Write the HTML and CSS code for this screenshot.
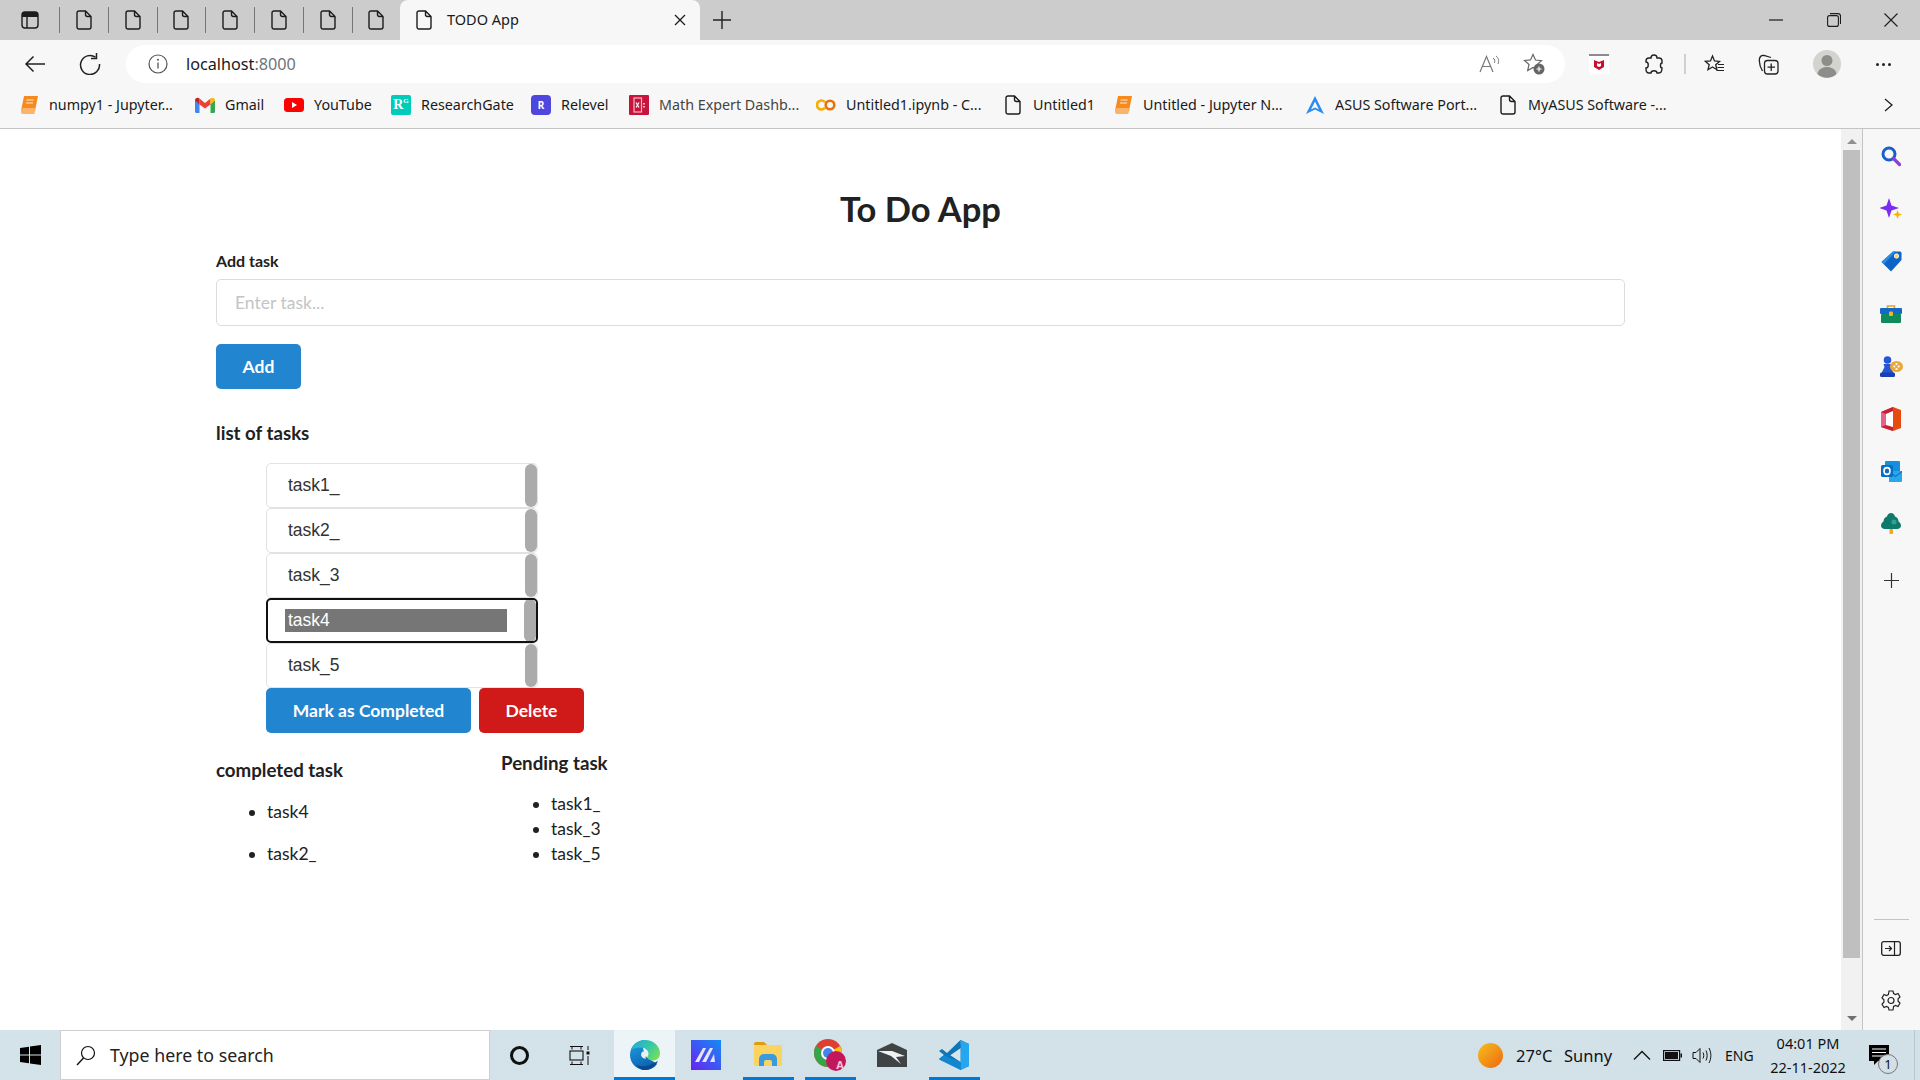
FILE: index.html
```html
<!DOCTYPE html>
<html>
<head>
    <title>TODO App</title>
    <link rel="stylesheet" href="styles.css">
</head>
<body>
    <svg class="defs" width="0" height="0">
        <symbol id="doc" viewBox="0 0 16 20">
            <path d="M3 1h6.500L15 6.500V17a2 2 0 0 1-2 2H3a2 2 0 0 1-2-2V3a2 2 0 0 1 2-2z M9.500 1v3.500a2 2 0 0 0 2 2H15" fill="none" stroke="#1c1c1c" stroke-width="1.400"/>
        </symbol>
        <symbol id="book" viewBox="0 0 20 20">
            <path d="M5 1h14l-3 15H2z" fill="#f58a1f"/>
            <path d="M2 16c0-2 1-3 3-3h11l-.6 6H4c-1.500 0-2-1-2-3z" fill="#fbb26a"/>
            <path d="M7.500 5h7M7 8h7" stroke="#fff" stroke-width="1.200" opacity=".8"/>
        </symbol>
    </svg>

    <div class="tabstrip">
        <div class="tab-menu">
            <svg width="18" height="18" viewBox="0 0 18 18"><rect x="1" y="1" width="16" height="16" rx="3" fill="none" stroke="#1c1c1c" stroke-width="1.400"/><path d="M1 4a3 3 0 0 1 3-3h10a3 3 0 0 1 3 3v2H1z" fill="#1c1c1c"/><path d="M6 6v11" stroke="#1c1c1c" stroke-width="1.400"/></svg>
        </div>
        <div class="tab-mini"><svg width="16" height="20"><use href="#doc"/></svg></div>
        <div class="tab-mini"><svg width="16" height="20"><use href="#doc"/></svg></div>
        <div class="tab-mini"><svg width="16" height="20"><use href="#doc"/></svg></div>
        <div class="tab-mini"><svg width="16" height="20"><use href="#doc"/></svg></div>
        <div class="tab-mini"><svg width="16" height="20"><use href="#doc"/></svg></div>
        <div class="tab-mini"><svg width="16" height="20"><use href="#doc"/></svg></div>
        <div class="tab-mini last"><svg width="16" height="20"><use href="#doc"/></svg></div>
        <div class="tab-active">
            <svg width="16" height="20"><use href="#doc"/></svg>
            <span class="tab-title">TODO App</span>
            <svg class="tab-close" width="12" height="12" viewBox="0 0 12 12"><path d="M1 1l10 10M11 1L1 11" stroke="#1c1c1c" stroke-width="1.300"/></svg>
        </div>
        <svg class="tab-new" width="18" height="18" viewBox="0 0 18 18"><path d="M9 0v18M0 9h18" stroke="#222" stroke-width="1.400"/></svg>
        <div class="win-controls">
            <svg width="14" height="14" viewBox="0 0 14 14"><path d="M0 7h14" stroke="#1c1c1c" stroke-width="1.200"/></svg>
            <svg width="14" height="14" viewBox="0 0 14 14"><rect x=".6" y="2.600" width="10.800" height="10.800" rx="2" fill="none" stroke="#1c1c1c" stroke-width="1.100"/><path d="M3 .6h8a2.500 2.500 0 0 1 2.500 2.500v8" fill="none" stroke="#1c1c1c" stroke-width="1.100"/></svg>
            <svg width="14" height="14" viewBox="0 0 14 14"><path d="M.5.500l13 13M13.500.5l-13 13" stroke="#1c1c1c" stroke-width="1.100"/></svg>
        </div>
    </div>

    <div class="toolbar">
        <svg class="tb-back" width="22" height="18" viewBox="0 0 22 18"><path d="M21 9H2M9.500 1.500L2 9l7.500 7.500" fill="none" stroke="#222" stroke-width="1.500"/></svg>
        <svg class="tb-reload" width="22" height="22" viewBox="0 0 22 22"><path d="M16.500 4.200A9.500 9.500 0 1 0 20.500 11" fill="none" stroke="#222" stroke-width="1.500"/><path d="M17.500 0v5.500H12" fill="none" stroke="#222" stroke-width="1.500"/></svg>
        <div class="address">
            <svg width="20" height="20" viewBox="0 0 20 20"><circle cx="10" cy="10" r="9" fill="none" stroke="#555" stroke-width="1.200"/><path d="M10 8.500v6" stroke="#555" stroke-width="1.300"/><circle cx="10" cy="5.800" r="1" fill="#555"/></svg>
            <span class="url">localhost<span class="url-port">:8000</span></span>
            <svg class="addr-read" width="22" height="18" viewBox="0 0 22 18"><path d="M1 17L7.500 1.500 14 17M3.500 11.500h8" fill="none" stroke="#777" stroke-width="1.200"/><path d="M14 3c2 1 2 3 1.500 5M17 1c3 2 3 5 2 8" fill="none" stroke="#777" stroke-width="1"/></svg>
            <svg class="addr-fav" width="22" height="22" viewBox="0 0 22 22"><path d="M10 1.500l2.500 5.500 6 .6-4.500 4 1.300 5.900L10 14.500l-5.300 3 1.300-6-4.500-4 6-.6z" fill="none" stroke="#666" stroke-width="1.200"/><circle cx="16" cy="16" r="5.500" fill="#666"/><path d="M13.500 16h5M16 13.500v5" stroke="#fff" stroke-width="1.200"/></svg>
        </div>
        <svg class="tb-mcafee" width="20" height="20" viewBox="0 0 20 20"><rect width="20" height="20" fill="#fff"/><rect width="20" height="2" fill="#8b8b8b"/><path d="M5 6l5 2 5-2v7l-5 3-5-3z" fill="#c8102e"/><path d="M8 9v3l2 1 2-1V9l-2 1z" fill="#fff"/></svg>
        <svg class="tb-ext" width="20" height="21" viewBox="0 0 20 21"><path d="M7 4c0-4 6-4 6 0h2c2 0 3 1 3 3v2c-2 0-2 5 0 5 0 3-1 5-3 5h-2c0-3-6-3-6 0H5c-2 0-3-2-3-4v-1c3 0 3-6 0-6V7c0-2 1-3 3-3z" fill="none" stroke="#222" stroke-width="1.400"/></svg>
        <div class="tb-sep"></div>
        <svg class="tb-favs" width="21" height="21" viewBox="0 0 21 21"><path d="M8.500 2l2 5 5 .4-3.800 3.300 1.200 5-4.400-2.700L4 15.700l1.200-5L1.500 7.400l5-.4z" fill="none" stroke="#222" stroke-width="1.300"/><path d="M14 10.500h6M13.500 13.500h6.500M12.500 16.500h7.500" stroke="#222" stroke-width="1.200"/></svg>
        <svg class="tb-coll" width="21" height="21" viewBox="0 0 21 21"><rect x="6.500" y="6.500" width="13.500" height="13.500" rx="3" fill="none" stroke="#222" stroke-width="1.300"/><path d="M13.200 9.500v7.500M9.500 13.200H17" stroke="#222" stroke-width="1.300"/><path d="M4.500 17C2 13 1 8 1.500 4.500 2 2.500 3.500 1 6 1.500L13 3.500" fill="none" stroke="#222" stroke-width="1.300"/></svg>
        <svg class="tb-avatar" width="28" height="28" viewBox="0 0 28 28"><circle cx="14" cy="14" r="14" fill="#d3d3d0"/><circle cx="14" cy="10.500" r="5.500" fill="#8d8d8a"/><path d="M4.500 24c1-5 5-7 9.500-7s8.500 2 9.500 7a14 14 0 0 1-19 0z" fill="#8d8d8a"/></svg>
        <div class="tb-dots"><i></i><i></i><i></i></div>
    </div>

    <div class="bookmarks">
        <div class="bm"><svg width="20" height="20"><use href="#book"/></svg><span>numpy1 - Jupyter...</span></div>
        <div class="bm"><svg width="20" height="16" viewBox="0 0 20 16"><path d="M0 3v11.500A1.500 1.500 0 0 0 1.500 16H4.500V7z" fill="#4285f4"/><path d="M20 3v11.500a1.500 1.500 0 0 1-1.500 1.500h-3V7z" fill="#34a853"/><path d="M4.500 7.500L10 11.500l5.500-4V1.500L10 6 4.500 1.500z" fill="#ea4335"/><path d="M0 3.500C0 .8 2.800 0 4.500 1.500v6z" fill="#c5221f"/><path d="M20 3.500C20 .8 17.200 0 15.500 1.500v6z" fill="#fbbc04"/></svg><span>Gmail</span></div>
        <div class="bm"><svg width="20" height="14" viewBox="0 0 20 14"><rect width="20" height="14" rx="3.500" fill="#f00"/><path d="M8 4l5 3-5 3z" fill="#fff"/></svg><span>YouTube</span></div>
        <div class="bm"><div class="ico-rg">R<sup>G</sup></div><span>ResearchGate</span></div>
        <div class="bm"><div class="ico-rel">R</div><span>Relevel</span></div>
        <div class="bm"><svg width="20" height="20" viewBox="0 0 20 20"><rect width="20" height="20" rx="1" fill="#c8143c"/><rect x="5" y="3" width="7.500" height="14" fill="none" stroke="#f3b6c4" stroke-width="1.200"/><path d="M7 7.500l3 5M10 7.500l-3 5" stroke="#fff" stroke-width="1.200"/><path d="M14 8h2v1.500h-2zM14 11h2v1.500h-2z" fill="#f3b6c4"/></svg><span class="bm-grey">Math Expert Dashb...</span></div>
        <div class="bm"><svg width="20" height="12" viewBox="0 0 20 12"><path d="M9 3.200A4.500 4.500 0 1 0 9 8.800" fill="none" stroke="#f9ab00" stroke-width="2.600"/><circle cx="14" cy="6" r="4.300" fill="none" stroke="#e8710a" stroke-width="2.600"/></svg><span>Untitled1.ipynb - C...</span></div>
        <div class="bm"><svg width="16" height="20"><use href="#doc"/></svg><span>Untitled1</span></div>
        <div class="bm"><svg width="20" height="20"><use href="#book"/></svg><span>Untitled - Jupyter N...</span></div>
        <div class="bm"><svg width="20" height="20" viewBox="0 0 20 20"><path d="M10 1L1 19l9-4.500 9 4.500zM10 6.500L6 14.500l4-2 4 2z" fill="#2a8bf2" fill-rule="evenodd"/></svg><span>ASUS Software Port...</span></div>
        <div class="bm"><svg width="16" height="20"><use href="#doc"/></svg><span>MyASUS Software -...</span></div>
        <svg class="bm-more" width="9" height="14" viewBox="0 0 9 14"><path d="M1 1l7 6-7 6" fill="none" stroke="#222" stroke-width="1.300"/></svg>
    </div>

    <div class="window">
        <div class="page">
            <div class="container">
                <h1>To Do App</h1>
                <label class="field-label">Add task</label>
                <input class="task-input" type="text" placeholder="Enter task...">
                <button class="btn btn-blue btn-add">Add</button>
                <h4 class="list-title">list of tasks</h4>
                <div class="task-list">
                    <div class="task-row"><span>task1_</span><i class="row-thumb"></i></div>
                    <div class="task-row"><span>task2_</span><i class="row-thumb"></i></div>
                    <div class="task-row"><span>task_3</span><i class="row-thumb"></i></div>
                    <div class="task-row focused"><span class="selected">task4</span><i class="row-thumb"></i></div>
                    <div class="task-row"><span>task_5</span><i class="row-thumb"></i></div>
                    <div class="task-actions">
                        <button class="btn btn-blue btn-done">Mark as Completed</button>
                        <button class="btn btn-red btn-delete">Delete</button>
                    </div>
                </div>
                <div class="results">
                    <div class="result-col done">
                        <h4>completed task</h4>
                        <ul>
                            <li>task4</li>
                            <li>task2_</li>
                        </ul>
                    </div>
                    <div class="result-col pending">
                        <h4>Pending task</h4>
                        <ul>
                            <li>task1_</li>
                            <li>task_3</li>
                            <li>task_5</li>
                        </ul>
                    </div>
                </div>
            </div>
        </div>
        <div class="scrollbar">
            <div class="arrow-up"></div>
            <div class="thumb"></div>
            <div class="arrow-down"></div>
        </div>
        <div class="sidebar">
            <div class="side-item"><svg width="20" height="21" viewBox="0 0 20 21"><circle cx="8" cy="8" r="6" fill="none" stroke="#1a5fc8" stroke-width="3"/><path d="M12.500 12.500l6 6" stroke="#8a3fd6" stroke-width="3.200" stroke-linecap="round"/></svg></div>
            <div class="side-item"><svg width="22" height="22" viewBox="0 0 22 22"><path d="M9 0l2.500 7.500L19 10l-7.500 2.500L9 20l-2.500-7.500L-1 10l7.500-2.500z" fill="#7a2cf0"/><path d="M17.500 12l1.200 3.300 3.300 1.200-3.300 1.200-1.200 3.300-1.200-3.300-3.300-1.200 3.300-1.200z" fill="#f7b500"/></svg></div>
            <div class="side-item"><svg width="21" height="21" viewBox="0 0 21 21"><path d="M12 .5h7a1.500 1.500 0 0 1 1.500 1.500v7L10 20.500.5 11z" fill="#0f62c6"/><path d="M.5 11L12 .5h3L3 13z" fill="#2b8be0"/><circle cx="15.500" cy="5" r="2.200" fill="#f9d64a" stroke="#fff" stroke-width=".8"/></svg></div>
            <div class="side-item"><svg width="22" height="18" viewBox="0 0 22 18"><path d="M7.500 3V1h7v2" fill="none" stroke="#e8a317" stroke-width="1.600"/><rect y="3" width="22" height="6" rx="1" fill="#1468c8"/><rect x="1" y="9" width="20" height="9" rx="1" fill="#0f8a5a"/><rect x="9" y="6.500" width="4" height="4.500" rx="1" fill="#f0b429"/></svg></div>
            <div class="side-item"><svg width="23" height="21" viewBox="0 0 23 21"><circle cx="7.500" cy="4" r="3.800" fill="#2456d6"/><path d="M3.500 8h8l-1 3 3 6h-12l3-6z" fill="#2456d6"/><rect y="16.500" width="15" height="4.500" rx="1.500" fill="#1a3fb0"/><ellipse cx="16.500" cy="10.500" rx="6.500" ry="5.500" fill="#e8a93a"/><circle cx="14.300" cy="10.500" r="1.100" fill="#fff"/><circle cx="18.700" cy="10.500" r="1.100" fill="#fff"/><circle cx="16.500" cy="8" r="1.100" fill="#fff"/><circle cx="16.500" cy="13" r="1.100" fill="#fff"/></svg></div>
            <div class="side-item"><svg width="20" height="24" viewBox="0 0 20 24"><path d="M0 5L12 0l8 3v18l-8 3-12-4z" fill="#e64a0e"/><path d="M0 5l12-5v4L5 7v11l7 2v4L0 20z" fill="#c81e3a"/><path d="M5 7l7-3v16l-7-2z" fill="#fff"/><path d="M0 5l5 2v11l-5 2z" fill="#e8608a"/></svg></div>
            <div class="side-item"><svg width="21" height="21" viewBox="0 0 21 21"><rect x="4" width="15" height="12" rx="1" fill="#1490df"/><path d="M8 10h13v10a1 1 0 0 1-1 1H8z" fill="#28a8ea"/><path d="M8 10l6.500 5L21 10v1l-6.500 5L8 11z" fill="#0f5fa8"/><rect y="4" width="12" height="12" rx="1.500" fill="#0a6cc4"/><ellipse cx="6" cy="10" rx="3" ry="3.400" fill="none" stroke="#fff" stroke-width="1.600"/></svg></div>
            <div class="side-item"><svg width="20" height="21" viewBox="0 0 20 21"><path d="M10 0c2 0 3.500 1.500 4 3.500 2 .5 3.500 2.500 3.500 5 1.500 1 2.500 2.500 2.500 4 0 2-1.500 3.500-4 3.500H4c-2.500 0-4-1.500-4-3.500 0-1.500 1-3 2.500-4 0-2.500 1.500-4.500 3.500-5C6.500 1.500 8 0 10 0z" fill="#0f7a6c"/><circle cx="13" cy="9" r="2.500" fill="#2fa58f"/><rect x="8.500" y="16" width="3.500" height="5" rx="1" fill="#f0a818"/></svg></div>
            <svg class="side-plus" width="15" height="15" viewBox="0 0 15 15"><path d="M7.500 0v15M0 7.500h15" stroke="#333" stroke-width="1.200"/></svg>
            <div class="side-bottom">
                <div class="side-rule"></div>
                <svg width="20" height="15" viewBox="0 0 20 15"><rect x=".7" y=".7" width="18.600" height="13.600" rx="2" fill="none" stroke="#222" stroke-width="1.300"/><path d="M13.500 1v13M4 7.500h6.500M8 5l2.500 2.500L8 10" fill="none" stroke="#222" stroke-width="1.200"/></svg>
                <svg class="side-gear" width="20" height="21" viewBox="0 0 20 21"><path d="M8 1h4l.6 2.600 1.900.9 2.500-1 2 3.400-1.900 1.800v2.600l1.900 1.800-2 3.400-2.500-1-1.900.9L12 20H8l-.6-2.600-1.900-.9-2.500 1-2-3.400 1.900-1.800V9.700L1 7.900l2-3.400 2.500 1 1.900-.9z" fill="none" stroke="#222" stroke-width="1.200"/><circle cx="10" cy="10.500" r="3" fill="none" stroke="#222" stroke-width="1.200"/></svg>
            </div>
        </div>
    </div>

    <div class="taskbar">
        <div class="tb-start">
            <svg width="21" height="20" viewBox="0 0 21 20"><path d="M0 3l9-1.300V9.500H0zM10 1.500L21 0v9.500H10zM0 10.500h9v7.800L0 17zM10 10.500h11V20l-11-1.500z" fill="#000"/></svg>
        </div>
        <div class="tb-search">
            <svg width="20" height="21" viewBox="0 0 20 21"><circle cx="12" cy="8" r="6.500" fill="none" stroke="#111" stroke-width="1.200"/><path d="M7.500 13L1 20" stroke="#111" stroke-width="1.400"/></svg>
            <span>Type here to search</span>
        </div>
        <div class="tb-cortana"><i></i></div>
        <div class="tb-view">
            <svg width="22" height="19" viewBox="0 0 22 19"><path d="M1 .5h13M3 .5v3M12 .5v3M1 18.500h13M3 18.500v-3M12 18.500v-3" fill="none" stroke="#111" stroke-width="1"/><rect x="1" y="5" width="13" height="9" fill="none" stroke="#111" stroke-width="1.100"/><path d="M19 0v4M19 10v9" stroke="#111" stroke-width="1"/><rect x="17.500" y="5.500" width="3" height="3" fill="#111"/></svg>
        </div>
        <div class="app wide running">
            <svg width="30" height="30" viewBox="0 0 30 30"><defs><linearGradient id="edgeA" x1="0" y1="0" x2="1" y2=".6"><stop offset="0" stop-color="#1fa8d8"/><stop offset=".6" stop-color="#35c8a8"/><stop offset="1" stop-color="#6fdc62"/></linearGradient><linearGradient id="edgeB" x1=".2" y1="0" x2=".6" y2="1"><stop offset="0" stop-color="#1d9ce2"/><stop offset="1" stop-color="#0d5fae"/></linearGradient></defs><path d="M15 0C7 0 0 6.500 0 15s7 15 15 15c5 0 9-2 12-6l-12-8-2-8z" fill="url(#edgeB)"/><path d="M1 9.500C3.500 3.500 9 0 15 0c8.500 0 15 6 15 13.500 0 4.500-3.500 7-7.500 7-3 0-5-1.500-5-3.500 0-1 1-1.500 1-3.500 0-3-3.500-6-8-6-4 0-7.500 1-9.500 2z" fill="url(#edgeA)"/><path d="M28 21c-2.500 5.500-7.500 9-13 9-4 0-7-2-8.500-5.500 3 2 7.500 2.500 11.500 1 3.500-1.200 6.500-3 10-4.500z" fill="#0b4a8e"/><path d="M12 12c2.500-1.500 5-.5 5.500 1.500-2 1-2.500 3-1.500 5-3.500.5-6.500-3-4-6.500z" fill="#e6f1f5"/></svg>
        </div>
        <div class="app">
            <svg width="30" height="30" viewBox="0 0 30 30"><defs><linearGradient id="mm" x1="0" y1="1" x2="1" y2="0"><stop offset="0" stop-color="#6a22f0"/><stop offset="1" stop-color="#128cf5"/></linearGradient></defs><rect width="30" height="30" fill="url(#mm)"/><path d="M4 22l8-14h3L8 22zM11 22l8-14h3l-7 14zM19 22l4-8 1 8z" fill="#e7e4ff"/></svg>
        </div>
        <div class="app running">
            <svg width="28" height="26" viewBox="0 0 28 26"><path d="M0 2a2 2 0 0 1 2-2h8l3 3h-13z" fill="#e09c10"/><rect y="3" width="28" height="21" rx="1.500" fill="#fbd45f"/><path d="M5 24v-7a5 5 0 0 1 5-5h8a5 5 0 0 1 5 5v7h-5v-4a2 2 0 0 0-2-2h-4a2 2 0 0 0-2 2v4z" fill="#3a9ae0"/></svg>
        </div>
        <div class="app running">
            <svg width="32" height="32" viewBox="0 0 32 32"><circle cx="14" cy="14" r="14" fill="#dd3f33"/><path d="M14 14l12-7a14 14 0 0 1 0 14l-5 7z" fill="#fbc117"/><path d="M14 14L2 7a14 14 0 0 0 0 14 14 14 0 0 0 16 6.500z" fill="#36a54a"/><circle cx="14" cy="14" r="7" fill="#fff"/><circle cx="14" cy="14" r="5" fill="#3f85f0"/><circle cx="22" cy="22" r="10" fill="#c2185b"/></svg>
            <span class="chrome-badge">A</span>
        </div>
        <div class="app">
            <svg width="30" height="24" viewBox="0 0 30 24"><path d="M15 0l15 7v17H0V7z" fill="#3f4344"/><path d="M1 8h14l13 5-9 1 5 7-10-8z" fill="#eef2f3"/></svg>
        </div>
        <div class="app running">
            <svg width="30" height="30" viewBox="0 0 30 30"><path d="M21.500 0L30 4v22l-8.500 4L8 17l13.500-13z" fill="#0e75b8"/><path d="M21.500 0L30 4v22l-8.500 4z" fill="#24a7ee"/><path d="M21.500 8L11 15l10.500 7z" fill="#d6e4eb"/><path d="M3 9L0 11l5 4-5 4 3 2 18.500-13V0L8 13z" fill="#0e75b8"/><path d="M3 21l-3-2 5-4 3 2 13.500 5v8z" fill="#1187cf"/></svg>
        </div>
        <div class="tray">
            <i class="tray-sun"></i>
            <span class="tray-temp">27°C</span>
            <span class="tray-sky">Sunny</span>
            <svg class="tray-up" width="18" height="10" viewBox="0 0 18 10"><path d="M1 9.500L9 1.500l8 8" fill="none" stroke="#111" stroke-width="1.300"/></svg>
            <svg class="tray-batt" width="19" height="11" viewBox="0 0 19 11"><rect x=".6" y=".6" width="16" height="9.800" fill="none" stroke="#111" stroke-width="1.200"/><rect x="2" y="2" width="13" height="7" fill="#111"/><rect x="17.500" y="3.500" width="1.500" height="4" fill="#111"/></svg>
            <svg class="tray-vol" width="20" height="17" viewBox="0 0 20 17"><path d="M1 5.500h3L8 1.500v14l-4-4H1z" fill="none" stroke="#111" stroke-width="1"/><path d="M11 5.500c1 2 1 4 0 6M14 3.500c1.500 3 1.500 7 0 10M17 1c2.500 5 2.500 10 0 15" fill="none" stroke="#111" stroke-width="1"/></svg>
            <span class="tray-lang">ENG</span>
            <div class="tray-clock">
                <div>04:01 PM</div>
                <div>22-11-2022</div>
            </div>
            <div class="tray-notif">
                <svg width="20" height="20" viewBox="0 0 20 20"><path d="M0 0h20v16H9l-4 4v-4H0z" fill="#000"/><path d="M3 4h14M3 7.500h14M3 11h14" stroke="#fff" stroke-width="1"/></svg>
                <span class="notif-count">1</span>
            </div>
        </div>
    </div>
</body>
</html>
```

FILE: styles.css
```css
* {
    box-sizing: border-box;
}
html, body {
    margin: 0;
    height: 1080px;
    overflow: hidden;
}
body {
    display: flex;
    flex-direction: column;
    font-family: "Noto Sans", sans-serif;
    color: #1a1a1a;
    background: #fff;
}
.defs {
    position: absolute;
}
svg {
    flex: none;
    display: block;
}

/* browser tabs */
.tabstrip {
    height: 40px;
    flex: none;
    display: flex;
    align-items: center;
    background: #cccccc;
}
.tab-menu {
    width: 60px;
    height: 26px;
    padding-left: 21px;
    display: flex;
    align-items: center;
    border-right: 1px solid #777;
}
.tab-mini {
    width: 48.75px;
    height: 26px;
    display: flex;
    align-items: center;
    justify-content: center;
    border-right: 1px solid #777;
}
.tab-mini.last {
    border-right: none;
    width: 47.500px;
}
.tab-active {
    width: 300px;
    height: 40px;
    display: flex;
    align-items: center;
    padding: 0 14px 0 16px;
    background: #f7f7f7;
    border-radius: 8px 8px 0 0;
}
.tab-title {
    margin-left: 15px;
    margin-top: -2px;
    font-size: 14.500px;
}
.tab-close {
    margin-left: auto;
}
.tab-new {
    margin-left: 13px;
}
.win-controls {
    margin-left: auto;
    width: 151px;
    padding-right: 22px;
    display: flex;
    justify-content: space-between;
}

/* address bar */
.toolbar {
    height: 48px;
    flex: none;
    display: flex;
    align-items: center;
    background: #f7f7f7;
}
.tb-back {
    margin-left: 24px;
}
.tb-reload {
    margin-left: 33px;
}
.address {
    width: 1439px;
    height: 38px;
    margin-left: 25px;
    display: flex;
    align-items: center;
    padding-left: 22px;
    background: #fff;
    border-radius: 19px;
}
.url {
    margin-left: 18px;
    font-size: 16.200px;
}
.url-port {
    color: #6f7378;
}
.addr-read {
    margin-left: auto;
}
.addr-fav {
    margin-left: 22px;
    margin-right: 20px;
}
.tb-mcafee {
    margin-left: 24px;
}
.tb-ext {
    margin-left: 35px;
}
.tb-sep {
    width: 2px;
    height: 20px;
    margin-left: 20px;
    background: #d0d0d0;
}
.tb-favs {
    margin-left: 18px;
}
.tb-coll {
    margin-left: 33px;
}
.tb-avatar {
    margin-left: 34px;
}
.tb-dots {
    margin-left: 35px;
    display: flex;
    gap: 3px;
}
.tb-dots i {
    width: 3px;
    height: 3px;
    border-radius: 50%;
    background: #222;
}

/* favourites */
.bookmarks {
    height: 41px;
    flex: none;
    display: grid;
    grid-template-columns: 176px 89px 107px 140px 98px 187px 187px 110px 192px 193px 190px 1fr;
    align-items: center;
    padding-left: 19px;
    padding-bottom: 7px;
    background: #f7f7f7;
    border-bottom: 1px solid #c4c4c4;
    font-size: 14.300px;
}
.bm {
    display: flex;
    align-items: center;
    gap: 10px;
    white-space: nowrap;
}
.bm svg {
    width: 20px;
}
.bm-grey {
    color: #444;
}
.bm-more {
    justify-self: end;
    margin-right: 27px;
}
.ico-rg {
    width: 20px;
    height: 20px;
    border-radius: 2px;
    background: #00ccbb;
    color: #fff;
    font: bold 14px/20px "Liberation Serif", serif;
    text-align: center;
}
.ico-rg sup {
    font-size: 7px;
    line-height: 0;
}
.ico-rel {
    width: 20px;
    height: 20px;
    border-radius: 4px;
    background: #4f46e0;
    color: #fff;
    font: bold 10px/20px "Noto Sans", sans-serif;
    text-align: center;
}

/* main window */
.window {
    flex: 1;
    display: flex;
    min-height: 0;
}
.page {
    flex: 1;
    background: #fff;
    font-family: Lato, sans-serif;
    font-size: 17.500px;
    color: #212121;
}
.container {
    width: 1409px;
    margin: 0 auto;
    padding-top: 60px;
}
h1 {
    margin: 0 0 22px;
    font-size: 34.500px;
    line-height: 40px;
    font-weight: 700;
    text-align: center;
}
.field-label {
    display: block;
    font-size: 16px;
    line-height: 20px;
    font-weight: 700;
    margin-bottom: 8px;
}
.task-input {
    display: block;
    width: 100%;
    height: 47px;
    padding: 0 18px;
    font-family: Lato, sans-serif;
    font-size: 17.500px;
    background: #fff;
    border: 1px solid #dcdcdc;
    border-radius: 5px;
}
.task-input::placeholder {
    color: #c4c4c4;
}
.btn {
    display: block;
    height: 45px;
    padding: 0;
    border: none;
    border-radius: 5px;
    color: #fff;
    font-family: Lato, sans-serif;
    font-size: 17.500px;
    font-weight: 700;
}
.btn-blue {
    background: #2185d0;
}
.btn-red {
    background: #d01919;
}
.btn-add {
    width: 85px;
    margin-top: 18px;
}
h4 {
    margin: 0;
    font-size: 18.700px;
    line-height: 22px;
    font-weight: 700;
}
.list-title {
    margin-top: 33px;
}
.task-list {
    width: 318px;
    margin: 19px 0 0 50px;
}
.task-row {
    width: 272px;
    height: 45px;
    display: flex;
    align-items: center;
    padding-left: 21px;
    background: #fff;
    border: 1px solid #e2e2e2;
    border-radius: 5px;
    font-family: "Liberation Sans", sans-serif;
    font-size: 17.500px;
    color: #333;
    overflow: hidden;
}
.task-row span {
    flex: 1;
}
.row-thumb {
    width: 12px;
    height: 43px;
    flex: none;
    background: #ababab;
    border-radius: 6px;
}
.task-row.focused {
    border: 2px solid #111;
    padding-left: 17px;
}
.selected {
    height: 23px;
    flex: none !important;
    width: 222px;
    margin-right: 17px;
    padding-left: 3px;
    line-height: 22px;
    background: #767676;
    color: #fff;
}
.task-actions {
    display: flex;
    gap: 8px;
}
.btn-done {
    width: 205px;
}
.btn-delete {
    width: 105px;
}
.results {
    display: flex;
    margin-top: 19px;
}
.result-col ul {
    margin: 0;
    padding-left: 51px;
}
.done {
    width: 285px;
    padding-top: 7px;
}
.done ul {
    margin-top: 18px;
}
.done li {
    line-height: 25px;
    margin-bottom: 17px;
}
.pending ul {
    margin-top: 17px;
    padding-left: 50px;
}
.pending li {
    line-height: 25px;
}

/* page scrollbar */
.scrollbar {
    width: 21px;
    flex: none;
    display: flex;
    flex-direction: column;
    align-items: center;
    background: #f1f1f1;
}
.arrow-up {
    margin-top: 10px;
    border: 5px solid transparent;
    border-top: none;
    border-bottom: 5px solid #8f8f8f;
}
.thumb {
    width: 17px;
    height: 808px;
    margin-top: 6px;
    background: #bfbfbf;
}
.arrow-down {
    margin-top: 58px;
    border: 5px solid transparent;
    border-bottom: none;
    border-top: 5px solid #707070;
}

/* edge sidebar */
.sidebar {
    width: 58px;
    flex: none;
    display: flex;
    flex-direction: column;
    align-items: center;
    padding-top: 1px;
    padding-right: 1px;
    background: #f7f7f7;
    border-left: 1px solid #c4c4c4;
}
.side-item {
    height: 52.500px;
    display: flex;
    align-items: center;
}
.side-plus {
    margin-top: 23px;
}
.side-bottom {
    margin-top: auto;
    height: 111px;
    display: flex;
    flex-direction: column;
    align-items: center;
    gap: 21px;
}
.side-rule {
    width: 35px;
    height: 1px;
    background: #c4c4c4;
}
.side-gear {
    margin-top: 13px;
}

/* windows taskbar */
.taskbar {
    height: 50px;
    flex: none;
    display: flex;
    align-items: center;
    background: linear-gradient(90deg, #d4e3e9, #d2e1e8);
}
.tb-start {
    width: 60px;
    display: flex;
    justify-content: center;
}
.tb-search {
    width: 430px;
    height: 50px;
    display: flex;
    align-items: center;
    gap: 14px;
    padding-left: 15px;
    background: #fff;
    border: 1px solid #cfcfcf;
    font-size: 17.800px;
    color: #222;
}
.tb-cortana {
    width: 59px;
    display: flex;
    justify-content: center;
}
.tb-cortana i {
    width: 19px;
    height: 19px;
    border: 3px solid #111;
    border-radius: 50%;
}
.tb-view {
    width: 65px;
    display: flex;
    justify-content: center;
    padding-right: 4px;
}
.app {
    position: relative;
    width: 62px;
    height: 50px;
    display: flex;
    align-items: center;
    justify-content: center;
}
.app.wide {
    width: 61px;
    background: #ecf4f7;
}
.running::after {
    content: "";
    position: absolute;
    left: 6px;
    right: 5px;
    bottom: 0;
    height: 3px;
    background: #0078d4;
}
.wide.running::after {
    left: 0;
    right: 0;
}
.chrome-badge {
    position: absolute;
    left: 31px;
    top: 25px;
    width: 20px;
    font-size: 11px;
    font-weight: 700;
    line-height: 20px;
    text-align: center;
    color: #f5c6d6;
}
.tray {
    margin-left: auto;
    width: 442px;
    height: 50px;
    display: flex;
    align-items: center;
    color: #111;
}
.tray-sun {
    width: 25px;
    height: 25px;
    flex: none;
    margin-right: 13px;
    border-radius: 50%;
    background: linear-gradient(135deg, #f3c01f, #f2660f);
}
.tray-temp {
    width: 48px;
    font-size: 16.500px;
}
.tray-sky {
    width: 69px;
    font-size: 16.500px;
}
.tray-batt {
    margin-left: 12px;
}
.tray-vol {
    margin-left: 10px;
}
.tray-lang {
    width: 29px;
    margin-left: 13px;
    font-size: 14px;
}
.tray-clock {
    width: 90px;
    margin-left: 9px;
    font-size: 14.500px;
    line-height: 24px;
    text-align: center;
}
.tray-notif {
    position: relative;
    margin-left: 16px;
    width: 46px;
    height: 50px;
    padding-top: 15px;
    border-right: 1px solid #b9c6cc;
    margin-right: 5px;
}
.notif-count {
    position: absolute;
    left: 9px;
    top: 24px;
    width: 20px;
    height: 20px;
    border: 1px solid #777;
    border-radius: 50%;
    background: #d3dfe5;
    font-size: 13px;
    line-height: 19px;
    text-align: center;
}
```
